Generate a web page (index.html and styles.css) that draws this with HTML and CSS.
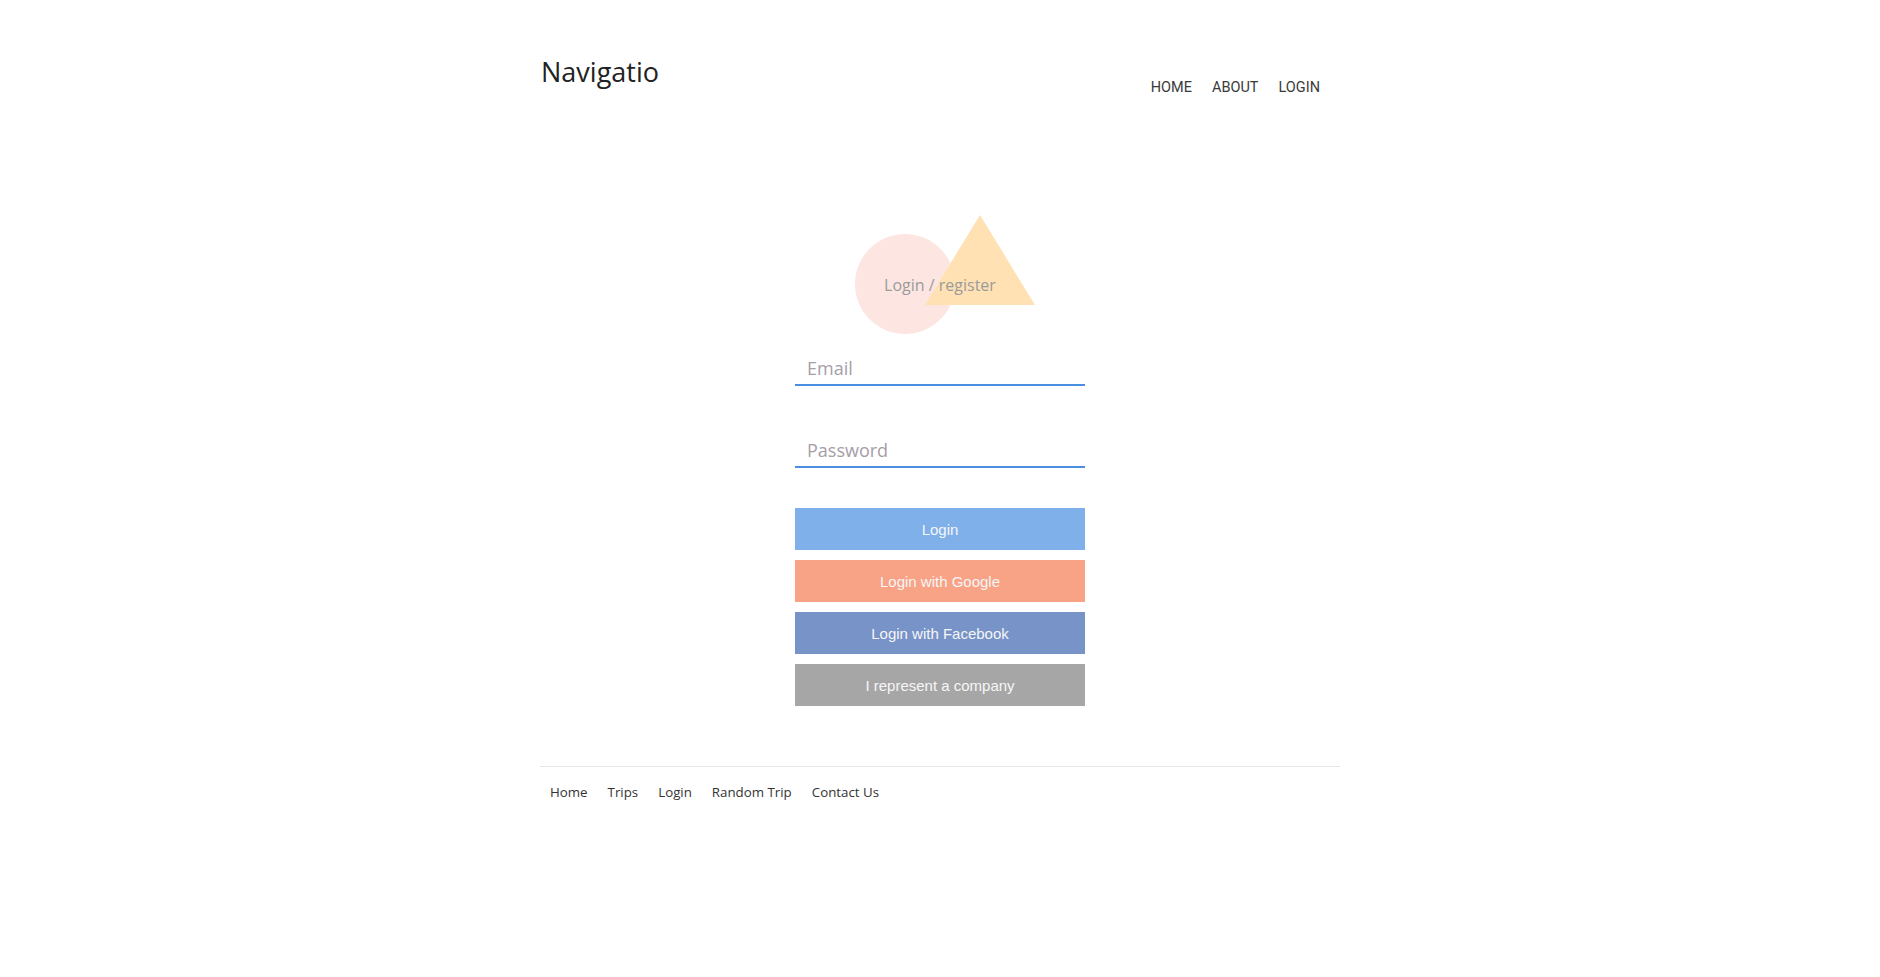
FILE: index.html
```html
<!DOCTYPE html>
<html lang="en">
<head>
<meta charset="utf-8">
<title>Navigatio</title>
<link rel="stylesheet" href="styles.css">
</head>
<body>
<div class="container">
  <header class="site-header">
    <div class="brand">Navigatio</div>
    <nav class="top-nav">
      <a href="#">HOME</a>
      <a href="#">ABOUT</a>
      <a href="#">LOGIN</a>
    </nav>
  </header>

  <main class="auth">
    <div class="mark">
      <span class="mark-circle"></span>
      <svg class="mark-triangle" width="110" height="90" viewBox="0 0 110 90" aria-hidden="true">
        <polygon points="55,0 110,90 0,90" fill="#ffe1b3"/>
      </svg>
      <span class="mark-text">Login / register</span>
    </div>

    <form class="auth-form">
      <input class="field" type="email" placeholder="Email">
      <input class="field field-password" type="password" placeholder="Password">
      <div class="buttons">
        <button type="button" class="btn btn-login">Login</button>
        <button type="button" class="btn btn-google">Login with Google</button>
        <button type="button" class="btn btn-facebook">Login with Facebook</button>
        <button type="button" class="btn btn-company">I represent a company</button>
      </div>
    </form>
  </main>

  <footer class="site-footer">
    <a href="#">Home</a>
    <a href="#">Trips</a>
    <a href="#">Login</a>
    <a href="#">Random Trip</a>
    <a href="#">Contact Us</a>
  </footer>
</div>
</body>
</html>
```
FILE: styles.css
```css
* { box-sizing: border-box; }

html, body {
  margin: 0;
  padding: 0;
  background: #ffffff;
}

body {
  font-family: "Open Sans", "Noto Sans", sans-serif;
  color: #333333;
}

a { text-decoration: none; color: inherit; }

.container {
  width: 800px;
  margin: 0 auto;
}

.site-header {
  display: flex;
  justify-content: space-between;
  align-items: flex-start;
  padding-top: 54px;
  height: 98px;
}

.brand {
  font-size: 27px;
  line-height: 36px;
  color: #222222;
  padding-left: 1px;
}

.top-nav {
  display: flex;
  margin-top: 24px;
  margin-right: 10px;
}

.top-nav a {
  font-family: Roboto, "Liberation Sans", sans-serif;
  font-size: 14.5px;
  line-height: 20px;
  color: #3a3a3a;
  padding: 0 10px;
}

.auth {
  padding-top: 117px;
  display: flex;
  flex-direction: column;
  align-items: center;
}

.mark {
  position: relative;
  width: 290px;
  height: 120px;
  margin-bottom: 15px;
}

.mark-circle {
  position: absolute;
  left: 60px;
  top: 19px;
  width: 100px;
  height: 100px;
  border-radius: 50%;
  background: #fde6e2;
}

.mark-triangle {
  position: absolute;
  left: 130px;
  top: 0;
  display: block;
}

.mark-text {
  position: absolute;
  left: 0;
  right: 0;
  top: 60px;
  text-align: center;
  font-size: 16px;
  line-height: 20px;
  color: #9b9b9b;
}

.auth-form {
  width: 290px;
  display: flex;
  flex-direction: column;
}

.field {
  display: block;
  width: 290px;
  height: 36px;
  border: none;
  border-bottom: 2px solid #4a8fe2;
  padding: 2px 12px 0;
  font-family: "Open Sans", "Noto Sans", sans-serif;
  font-size: 18px;
  color: #555555;
  background: transparent;
  outline: none;
}

.field::placeholder {
  color: #a59ea7;
}

.field-password {
  margin-top: 46px;
}

.buttons {
  margin-top: 40px;
  display: flex;
  flex-direction: column;
  gap: 10px;
}

.btn {
  display: block;
  width: 290px;
  height: 42px;
  border: none;
  padding: 0;
  font-family: "Liberation Sans", Arial, sans-serif;
  font-size: 15px;
  color: #f6f6f6;
  cursor: pointer;
}

.btn-login { background: #7fb0ea; }
.btn-google { background: #f8a286; }
.btn-facebook { background: #7793c8; }
.btn-company { background: #a6a6a6; }

.site-footer {
  margin-top: 60px;
  border-top: 1px solid #e6e6e6;
  padding-top: 15px;
  display: flex;
}

.site-footer a {
  font-size: 13.3px;
  line-height: 20px;
  color: #333333;
  padding: 0 10px;
}
```
